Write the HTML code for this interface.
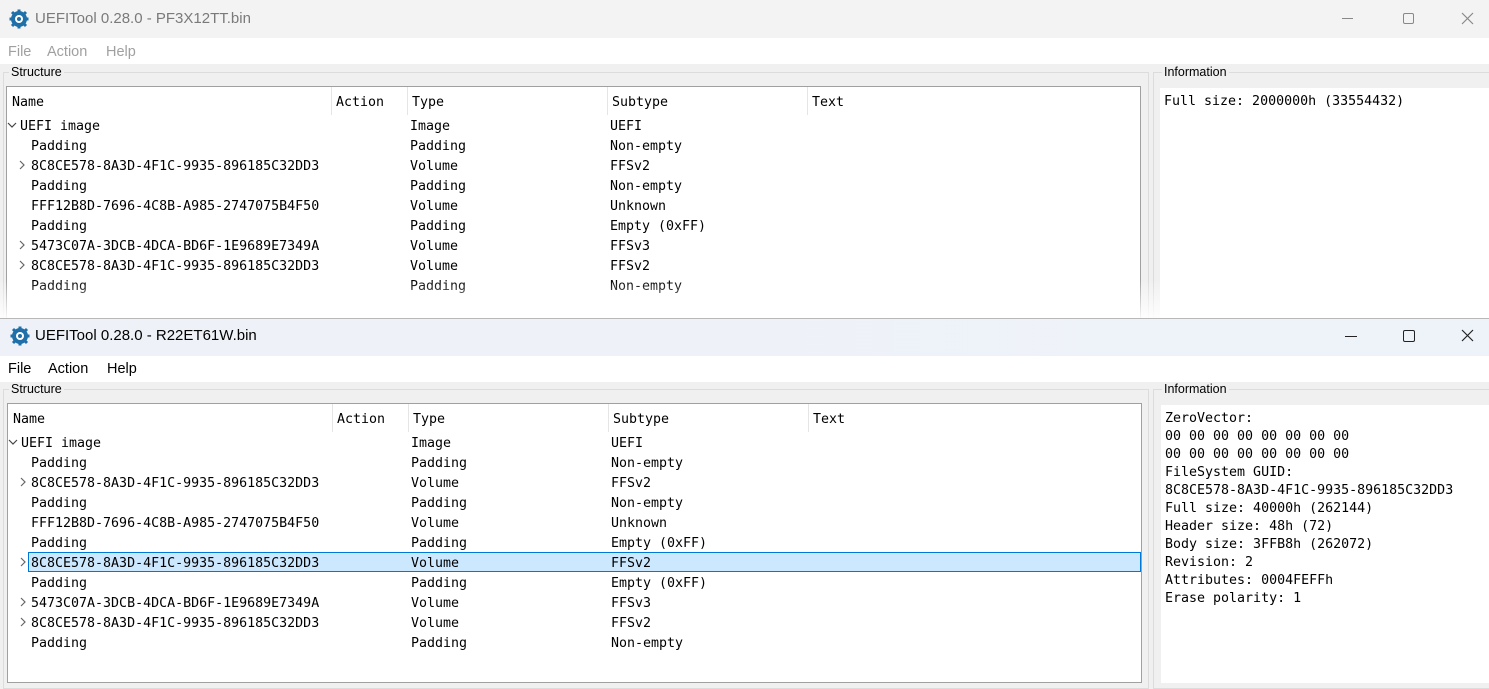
<!DOCTYPE html>
<html><head><meta charset="utf-8"><style>
*{margin:0;padding:0;box-sizing:border-box}
body{width:1489px;height:675px;overflow:hidden;background:#f0f0f0;position:relative;font-family:"Liberation Sans",sans-serif}
.a{position:absolute;white-space:pre}
.m{font-family:"DejaVu Sans Mono","Liberation Mono",monospace;font-size:13.3px;color:#000}
.t{font-size:14px}
.s{font-size:12.5px;color:#000}
.menu{font-size:14.5px}
.box{position:absolute;background:#fff;border:1px solid #a0a0a0}
.grp{position:absolute;border:1px solid #dcdcdc}
.vl{position:absolute;width:1px;background:#e5e5e5}
.ch{position:absolute}
</style></head><body>

<!-- TOP WINDOW -->
<div class="a" style="left:0;top:0;width:1489px;height:38px;background:#f3f3f3"></div>
<svg class="a" style="left:9px;top:9px" width="20" height="20" viewBox="0 0 20 20"><circle cx="10" cy="10" r="8" fill="#1f6fa8"/><g stroke="#1f6fa8" stroke-width="3"><line x1="10" y1="0.5" x2="10" y2="19.5"/><line x1="0.5" y1="10" x2="19.5" y2="10"/><line x1="3" y1="3" x2="17" y2="17"/><line x1="17" y1="3" x2="3" y2="17"/></g><circle cx="10" cy="10" r="4" fill="#fff"/><circle cx="10" cy="10" r="2" fill="#1f6fa8"/></svg>
<div class="a t" style="left:35px;top:10px;color:#7a7a7a;font-size:15px">UEFITool 0.28.0 - PF3X12TT.bin</div>
<div class="a" style="left:1342px;top:18px;width:11px;height:1px;background:#888"></div>
<div class="a" style="left:1403px;top:13px;width:11px;height:11px;border:1px solid #888;border-radius:2px"></div>
<svg class="a" style="left:1461px;top:12px" width="13" height="13"><path d="M1 1L12 12M12 1L1 12" stroke="#888" stroke-width="1.2"/></svg>
<div class="a" style="left:0;top:38px;width:1489px;height:26px;background:#fff"></div>
<div class="a menu" style="left:8px;top:44px;color:#a0a0a0">File</div>
<div class="a menu" style="left:47px;top:44px;color:#a0a0a0">Action</div>
<div class="a menu" style="left:106px;top:44px;color:#a0a0a0">Help</div>
<div class="grp" style="left:3px;top:72px;width:1146px;height:260px"></div>
<div class="a s" style="left:9px;top:65px;background:#f0f0f0;padding:0 2px">Structure</div>
<div class="box" style="left:6px;top:86px;width:1135px;height:250px"></div>
<div class="vl" style="left:331px;top:87px;height:28px"></div>
<div class="vl" style="left:407px;top:87px;height:28px"></div>
<div class="vl" style="left:607px;top:87px;height:28px"></div>
<div class="vl" style="left:807px;top:87px;height:28px"></div>
<div class="a m" style="left:12px;top:95px">Name</div>
<div class="a m" style="left:336px;top:95px">Action</div>
<div class="a m" style="left:412px;top:95px">Type</div>
<div class="a m" style="left:612px;top:95px">Subtype</div>
<div class="a m" style="left:812px;top:95px">Text</div>
<div class="grp" style="left:1153px;top:72px;width:340px;height:260px"></div>
<div class="a s" style="left:1162px;top:65px;background:#f0f0f0;padding:0 2px">Information</div>
<div class="box" style="left:1159px;top:87px;width:340px;height:250px;border-color:#f0f0f0"></div>
<div class="a m" style="left:1164px;top:94px">Full size: 2000000h (33554432)</div>

<svg class="ch" style="left:7px;top:121px" width="10" height="8"><path d="M1 2L5 6L9 2" stroke="#444" fill="none" stroke-width="1.2"/></svg>
<div class="a m" style="left:20px;top:117px;line-height:20px">UEFI image</div>
<div class="a m" style="left:31px;top:137px;line-height:20px">Padding
8C8CE578-8A3D-4F1C-9935-896185C32DD3
Padding
FFF12B8D-7696-4C8B-A985-2747075B4F50
Padding
5473C07A-3DCB-4DCA-BD6F-1E9689E7349A
8C8CE578-8A3D-4F1C-9935-896185C32DD3
Padding</div>
<div class="a m" style="left:410px;top:117px;line-height:20px">Image
Padding
Volume
Padding
Volume
Padding
Volume
Volume
Padding</div>
<div class="a m" style="left:610px;top:117px;line-height:20px">UEFI
Non-empty
FFSv2
Non-empty
Unknown
Empty (0xFF)
FFSv3
FFSv2
Non-empty</div>
<svg class="ch" style="left:19px;top:160px" width="7" height="10"><path d="M1 1L5 5L1 9" stroke="#666" fill="none" stroke-width="1.2"/></svg>
<svg class="ch" style="left:19px;top:240px" width="7" height="10"><path d="M1 1L5 5L1 9" stroke="#666" fill="none" stroke-width="1.2"/></svg>
<svg class="ch" style="left:19px;top:260px" width="7" height="10"><path d="M1 1L5 5L1 9" stroke="#666" fill="none" stroke-width="1.2"/></svg>
<div class="a" style="left:0;top:280px;width:1489px;height:38px;background:linear-gradient(rgba(255,255,255,0),rgba(255,255,255,.9))"></div>

<!-- BOTTOM WINDOW -->
<div class="a" style="left:0;top:318px;width:1489px;height:357px;background:#f0f0f0;border-top:1px solid #b8b8b8"></div>
<div class="a" style="left:0;top:319px;width:1489px;height:37px;background:linear-gradient(90deg,#eef2f8,#eef3f9)"></div>
<svg class="a" style="left:10px;top:326px" width="20" height="20" viewBox="0 0 20 20"><circle cx="10" cy="10" r="8" fill="#1f6fa8"/><g stroke="#1f6fa8" stroke-width="3"><line x1="10" y1="0.5" x2="10" y2="19.5"/><line x1="0.5" y1="10" x2="19.5" y2="10"/><line x1="3" y1="3" x2="17" y2="17"/><line x1="17" y1="3" x2="3" y2="17"/></g><circle cx="10" cy="10" r="4" fill="#fff"/><circle cx="10" cy="10" r="2" fill="#1f6fa8"/></svg>
<div class="a t" style="left:35px;top:327px;color:#000;font-size:15px">UEFITool 0.28.0 - R22ET61W.bin</div>
<div class="a" style="left:1345px;top:336px;width:12px;height:1px;background:#222"></div>
<div class="a" style="left:1403px;top:330px;width:12px;height:12px;border:1px solid #222;border-radius:2px"></div>
<svg class="a" style="left:1461px;top:329px" width="13" height="13"><path d="M1 1L12 12M12 1L1 12" stroke="#222" stroke-width="1.2"/></svg>
<div class="a" style="left:0;top:356px;width:1489px;height:26px;background:#fff"></div>
<div class="a menu" style="left:8px;top:361px">File</div>
<div class="a menu" style="left:48px;top:361px">Action</div>
<div class="a menu" style="left:107px;top:361px">Help</div>
<div class="grp" style="left:3px;top:389px;width:1146px;height:300px"></div>
<div class="a s" style="left:9px;top:382px;background:#f0f0f0;padding:0 2px">Structure</div>
<div class="box" style="left:7px;top:403px;width:1135px;height:280px"></div>
<div class="vl" style="left:332px;top:404px;height:28px"></div>
<div class="vl" style="left:408px;top:404px;height:28px"></div>
<div class="vl" style="left:608px;top:404px;height:28px"></div>
<div class="vl" style="left:808px;top:404px;height:28px"></div>
<div class="a m" style="left:13px;top:412px">Name</div>
<div class="a m" style="left:337px;top:412px">Action</div>
<div class="a m" style="left:413px;top:412px">Type</div>
<div class="a m" style="left:613px;top:412px">Subtype</div>
<div class="a m" style="left:813px;top:412px">Text</div>
<div class="grp" style="left:1153px;top:389px;width:340px;height:300px"></div>
<div class="a s" style="left:1162px;top:382px;background:#f0f0f0;padding:0 2px">Information</div>
<div class="box" style="left:1160px;top:404px;width:340px;height:280px;border-color:#f0f0f0"></div>
<div class="a m" style="left:1165px;top:410px;line-height:18px">ZeroVector:
00 00 00 00 00 00 00 00
00 00 00 00 00 00 00 00
FileSystem GUID:
8C8CE578-8A3D-4F1C-9935-896185C32DD3
Full size: 40000h (262144)
Header size: 48h (72)
Body size: 3FFB8h (262072)
Revision: 2
Attributes: 0004FEFFh
Erase polarity: 1</div>

<div class="a" style="left:28px;top:552px;width:1113px;height:20px;background:#cce8ff;border:1px solid #0078d7"></div>
<svg class="ch" style="left:8px;top:438px" width="10" height="8"><path d="M1 2L5 6L9 2" stroke="#444" fill="none" stroke-width="1.2"/></svg>
<div class="a m" style="left:21px;top:434px;line-height:20px">UEFI image</div>
<div class="a m" style="left:31px;top:454px;line-height:20px">Padding
8C8CE578-8A3D-4F1C-9935-896185C32DD3
Padding
FFF12B8D-7696-4C8B-A985-2747075B4F50
Padding
8C8CE578-8A3D-4F1C-9935-896185C32DD3
Padding
5473C07A-3DCB-4DCA-BD6F-1E9689E7349A
8C8CE578-8A3D-4F1C-9935-896185C32DD3
Padding</div>
<div class="a m" style="left:411px;top:434px;line-height:20px">Image
Padding
Volume
Padding
Volume
Padding
Volume
Padding
Volume
Volume
Padding</div>
<div class="a m" style="left:611px;top:434px;line-height:20px">UEFI
Non-empty
FFSv2
Non-empty
Unknown
Empty (0xFF)
FFSv2
Empty (0xFF)
FFSv3
FFSv2
Non-empty</div>
<svg class="ch" style="left:20px;top:477px" width="7" height="10"><path d="M1 1L5 5L1 9" stroke="#666" fill="none" stroke-width="1.2"/></svg>
<svg class="ch" style="left:20px;top:557px" width="7" height="10"><path d="M1 1L5 5L1 9" stroke="#666" fill="none" stroke-width="1.2"/></svg>
<svg class="ch" style="left:20px;top:597px" width="7" height="10"><path d="M1 1L5 5L1 9" stroke="#666" fill="none" stroke-width="1.2"/></svg>
<svg class="ch" style="left:20px;top:617px" width="7" height="10"><path d="M1 1L5 5L1 9" stroke="#666" fill="none" stroke-width="1.2"/></svg>
</body></html>
